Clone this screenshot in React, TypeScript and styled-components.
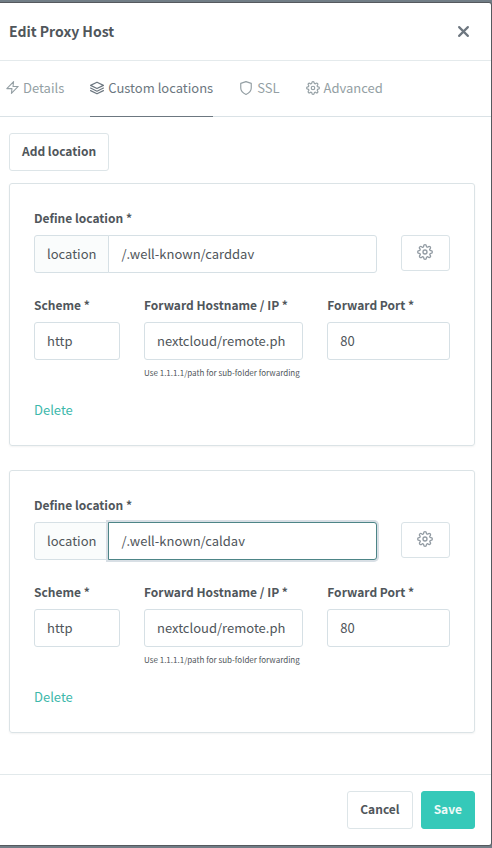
import React, { useState } from "react";
import styled, { createGlobalStyle, css } from "styled-components";

const GlobalStyle = createGlobalStyle`
  *, *::before, *::after { box-sizing: border-box; }
  body {
    margin: 0;
    background: #717d86;
    color: #50565b;
    font-family: "Noto Sans CJK SC", "Noto Sans", sans-serif;
    font-size: 13px;
    line-height: 22px;
  }
  button, input, select { font: inherit; color: inherit; margin: 0; }
`;

const Backdrop = styled.div`
  min-height: 100vh;
  padding: 2px 0;
`;

const Dialog = styled.div`
  background: #fff;
  border: 1px solid #55595e;
  border-left: 0;
  border-radius: 0 3px 3px 0;
`;

const Header = styled.header`
  display: flex;
  align-items: center;
  justify-content: space-between;
  height: 58px;
  padding: 0 20px 0 9px;
  border-bottom: 1px solid #e4eaec;
`;

const Title = styled.h1`
  margin: 0;
  padding-bottom: 2px;
  font-size: 14px;
  line-height: 22px;
  font-weight: 600;
`;

const CloseButton = styled.button`
  display: flex;
  padding: 0;
  border: 0;
  background: none;
  color: #6e7780;
  cursor: pointer;
`;

const Tabs = styled.nav`
  display: flex;
  gap: 26px;
  height: 56px;
  padding-left: 6px;
  border-bottom: 1px solid #dae2e6;
`;

const Tab = styled.a<{ $active?: boolean }>`
  display: flex;
  align-items: center;
  gap: 4px;
  height: 56px;
  padding-bottom: 2px;
  white-space: nowrap;
  text-decoration: none;
  color: ${(p) => (p.$active ? "#6c7780" : "#949fa4")};
  border-bottom: 1px solid ${(p) => (p.$active ? "#6c7780" : "transparent")};
`;

const Body = styled.main`
  display: flex;
  flex-direction: column;
  align-items: flex-start;
  padding: 16px 16px 41px 9px;
`;

const Button = styled.button<{ $primary?: boolean }>`
  height: 38px;
  padding: 0 12px 2px;
  border: 1px solid ${(p) => (p.$primary ? "#35c9b9" : "#dde5e8")};
  border-radius: 3px;
  background: ${(p) => (p.$primary ? "#35c9b9" : "#fff")};
  color: ${(p) => (p.$primary ? "#eefaf8" : "#50565b")};
  font-size: 12px;
  font-weight: 600;
  white-space: nowrap;
  cursor: pointer;
`;

const Card = styled.section`
  align-self: stretch;
  padding: 24px;
  border: 1px solid #dbe3e6;
  border-radius: 3px;
  box-shadow: 0 1px 2px rgba(0, 0, 0, 0.05);

  button + & { margin-top: 12px; }
  & + & { margin-top: 24px; }
`;

const FieldRow = styled.div`
  display: grid;
  grid-template-columns: repeat(12, minmax(0, 1fr));
  column-gap: 24px;
  align-items: end;

  & + & { margin-top: 22px; align-items: start; }
`;

const Field = styled.div<{ $span: number }>`
  grid-column: span ${(p) => p.$span};
  min-width: 0;
`;

const Label = styled.label`
  display: block;
  margin-bottom: 7px;
  font-size: 12px;
  line-height: 20px;
  font-weight: 600;
  white-space: nowrap;
`;

const control = css`
  display: block;
  width: 100%;
  min-width: 0;
  height: 38px;
  padding: 0 12px;
  border: 1px solid #d6e0e5;
  border-radius: 3px;
  background: #fff;
  outline: 0;
`;

const activeControl = css`
  position: relative;
  border-color: #4d8587;
  box-shadow: 0 0 0 2px #d8dfe5;
`;

const Input = styled.input<{ $active?: boolean }>`
  ${control}
  padding-bottom: 2px;
  &:focus { ${activeControl} }
  ${(p) => p.$active && activeControl}
`;

const Select = styled.select`
  ${control}
  appearance: none;
`;

const InputGroup = styled.div`
  display: flex;

  ${Input} {
    flex: 1;
    border-radius: 0 3px 3px 0;
  }
`;

const Prefix = styled.span`
  display: flex;
  align-items: center;
  height: 38px;
  margin-right: -1px;
  padding: 0 12px;
  border: 1px solid #d6e0e5;
  border-radius: 3px 0 0 3px;
  background: #fafcfc;
`;

const GearButton = styled.button`
  display: flex;
  align-items: center;
  justify-content: center;
  width: 100%;
  height: 36px;
  margin-bottom: 2px;
  padding: 0 0 2px;
  border: 1px solid #dae3e7;
  border-radius: 3px;
  background: #fff;
  color: #929ba3;
  cursor: pointer;
`;

const Hint = styled.small`
  display: block;
  margin-top: 4px;
  font-size: 8px;
  line-height: 18px;
  white-space: nowrap;
`;

const DeleteLink = styled.a`
  display: inline-block;
  margin-top: 17px;
  color: #3db8ab;
  text-decoration: none;
  vertical-align: top;
`;

const Footer = styled.footer`
  display: flex;
  justify-content: flex-end;
  gap: 8px;
  padding: 16px;
  border-top: 1px solid #e2e9eb;
`;

const Svg = styled.svg`
  flex: none;
  fill: none;
  stroke: currentColor;
  stroke-width: 2;
  stroke-linecap: round;
  stroke-linejoin: round;
`;

type IconProps = { size?: number };

const ZapIcon = ({ size = 13 }: IconProps) => (
  <Svg width={size} height={size} viewBox="0 0 24 24" aria-hidden="true">
    <path d="M14 1 1.500 14H11l-1 9L22.500 10H13l1-9Z" />
  </Svg>
);

const LayersIcon = ({ size = 14 }: IconProps) => (
  <Svg width={size} height={size} viewBox="0 0 24 24" aria-hidden="true">
    <path d="m12 2 11 5.5L12 13 1 7.500 12 2ZM1 12l11 5.500L23 12M1 16.500 12 22l11-5.500" />
  </Svg>
);

const ShieldIcon = ({ size = 14 }: IconProps) => (
  <Svg width={size} height={size} viewBox="0 0 24 24" aria-hidden="true">
    <path d="M12 23s9-4 9-11V4l-9-3-9 3v8c0 7 9 11 9 11Z" />
  </Svg>
);

const GearIcon = ({ size = 14 }: IconProps) => (
  <Svg width={size} height={size} viewBox="0 0 24 24" aria-hidden="true">
    <circle cx="12" cy="12" r="3" />
    <path d="M19.400 15a1.650 1.650 0 0 0 .33 1.820l.06.06a2 2 0 1 1-2.830 2.830l-.06-.06a1.650 1.650 0 0 0-2.800 1.170V21a2 2 0 0 1-4 0v-.09A1.650 1.650 0 0 0 7.180 19.730l-.06.06a2 2 0 1 1-2.830-2.830l.06-.06A1.650 1.650 0 0 0 3.090 14H3a2 2 0 0 1 0-4h.09A1.650 1.650 0 0 0 4.270 7.180l-.06-.06a2 2 0 1 1 2.830-2.830l.06.06A1.650 1.650 0 0 0 10 3.090V3a2 2 0 0 1 4 0v.09a1.650 1.650 0 0 0 2.820 1.180l.06-.06a2 2 0 1 1 2.830 2.830l-.06.06A1.650 1.650 0 0 0 20.910 10H21a2 2 0 0 1 0 4h-.09a1.650 1.650 0 0 0-1.510 1Z" />
  </Svg>
);

const CloseIcon = () => (
  <Svg width={15} height={15} viewBox="0 0 24 24" aria-hidden="true">
    <path d="M5 5l14 14M19 5 5 19" strokeWidth="3.500" />
  </Svg>
);

type LocationProps = { id: string; path: string; active?: boolean };

function LocationCard({ id, path, active }: LocationProps) {
  const [location, setLocation] = useState(path);
  const [host, setHost] = useState("nextcloud/remote.ph");
  const [port, setPort] = useState("80");

  return (
    <Card>
      <FieldRow>
        <Field $span={10}>
          <Label htmlFor={`${id}-path`}>Define location *</Label>
          <InputGroup>
            <Prefix>location</Prefix>
            <Input
              id={`${id}-path`}
              $active={active}
              value={location}
              onChange={(e) => setLocation(e.target.value)}
            />
          </InputGroup>
        </Field>
        <Field $span={2}>
          <GearButton type="button" aria-label="Location settings">
            <GearIcon size={16} />
          </GearButton>
        </Field>
      </FieldRow>
      <FieldRow>
        <Field $span={3}>
          <Label htmlFor={`${id}-scheme`}>Scheme *</Label>
          <Select id={`${id}-scheme`} defaultValue="http">
            <option value="http">http</option>
            <option value="https">https</option>
          </Select>
        </Field>
        <Field $span={5}>
          <Label htmlFor={`${id}-host`}>Forward Hostname / IP *</Label>
          <Input
            id={`${id}-host`}
            value={host}
            onChange={(e) => setHost(e.target.value)}
          />
          <Hint>Use 1.1.1.1/path for sub-folder forwarding</Hint>
        </Field>
        <Field $span={4}>
          <Label htmlFor={`${id}-port`}>Forward Port *</Label>
          <Input
            id={`${id}-port`}
            value={port}
            onChange={(e) => setPort(e.target.value)}
          />
        </Field>
      </FieldRow>
      <DeleteLink href="#delete">Delete</DeleteLink>
    </Card>
  );
}

export default function App() {
  return (
    <>
      <GlobalStyle />
      <Backdrop>
        <Dialog role="dialog" aria-labelledby="dialog-title">
          <Header>
            <Title id="dialog-title">Edit Proxy Host</Title>
            <CloseButton type="button" aria-label="Close">
              <CloseIcon />
            </CloseButton>
          </Header>
          <Tabs>
            <Tab href="#details"><ZapIcon />Details</Tab>
            <Tab href="#locations" $active aria-current="page"><LayersIcon />Custom locations</Tab>
            <Tab href="#ssl"><ShieldIcon />SSL</Tab>
            <Tab href="#advanced"><GearIcon />Advanced</Tab>
          </Tabs>
          <Body>
            <Button type="button">Add location</Button>
            <LocationCard id="carddav" path="/.well-known/carddav" />
            <LocationCard id="caldav" path="/.well-known/caldav" active />
          </Body>
          <Footer>
            <Button type="button">Cancel</Button>
            <Button type="button" $primary>Save</Button>
          </Footer>
        </Dialog>
      </Backdrop>
    </>
  );
}
